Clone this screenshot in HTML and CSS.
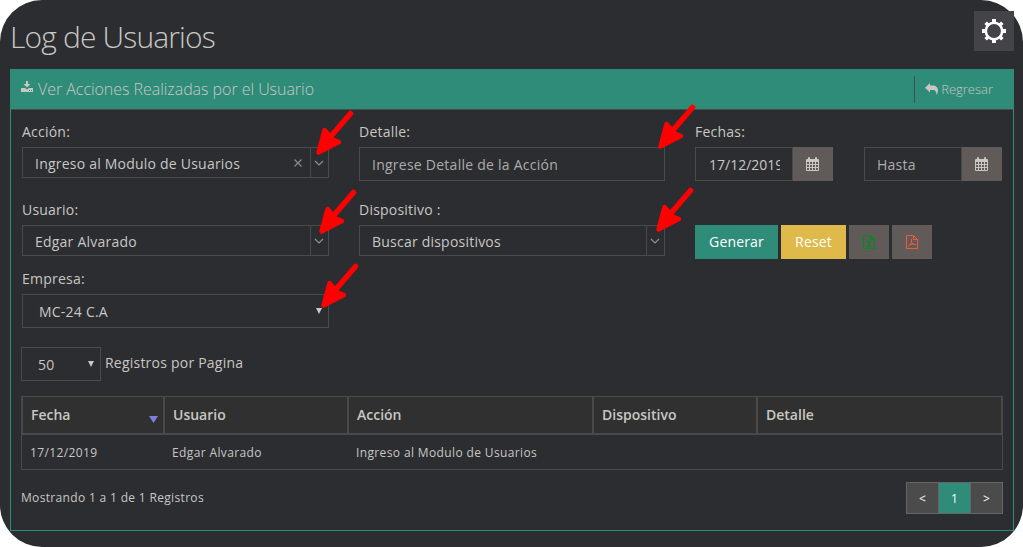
FILE: index.html
```html
<!DOCTYPE html>
<html lang="es">
<head>
<meta charset="utf-8">
<title>Log de Usuarios</title>
<link rel="stylesheet" href="styles.css">
</head>
<body>
<svg class="defs" width="0" height="0" aria-hidden="true">
  <symbol id="chevron" viewBox="0 0 10 6"><path d="M1 1l4 4 4-4" fill="none" stroke="currentColor" stroke-width="1.2"/></symbol>
  <symbol id="calendar" viewBox="0 0 13 14"><path fill="currentColor" fill-rule="evenodd" d="M0 3q0-1 1-1h1V1q0-1 1-1t1 1v1h5V1q0-1 1-1t1 1v1h1q1 0 1 1v10q0 1-1 1H1q-1 0-1-1zM1 5v2h2V5zm3 0v2h2V5zm3 0v2h2V5zm3 0v2h2V5zM1 8v2h2V8zm3 0v2h2V8zm3 0v2h2V8zm3 0v2h2V8zM1 11v2h2v-2zm3 0v2h2v-2zm3 0v2h2v-2zm3 0v2h2v-2z"/></symbol>
  <symbol id="pointer" viewBox="0 0 42 48"><path d="M36.500 5.500L18 27" stroke="#f00" stroke-width="5.500" stroke-linecap="round"/><path d="M4.500 44.500L10.500 22L16 28.500L19 31.500L25 34Z" fill="#f00" stroke="#f00" stroke-width="4.500" stroke-linejoin="round"/></symbol>
</svg>
<div class="page">
  <header class="page-head">
    <h1 class="title">Log de Usuarios</h1>
    <button class="settings" aria-label="Configuración">
      <svg width="24" height="24" viewBox="0 0 24 24"><circle cx="12" cy="12" r="8.200" fill="none" stroke="#fff" stroke-width="2.600"/><g fill="#fff"><path d="M10 0h4v4h-4zM10 20h4v4h-4zM0 10h4v4H0zM20 10h4v4h-4z"/><path d="M10.200 .2h3.600v3h-3.600zM10.200 20.800h3.600v3h-3.600zM.2 10.200h3v3.600h-3zM20.800 10.200h3v3.600h-3z" transform="rotate(45 12 12)"/></g></svg>
    </button>
  </header>

  <section class="card">
    <div class="card-head">
      <svg class="ic-download" width="12" height="11" viewBox="0 0 12 11"><path fill="currentColor" fill-rule="evenodd" d="M5 0h2v3h2.500L6 6.500 2.500 3H5zM0 7h4l2 1.500L8 7h4v4H0zM8 9v1h1V9zm2 0v1h1V9z"/></svg>
      <span class="card-title">Ver Acciones Realizadas por el Usuario</span>
      <a class="back">
        <svg width="13" height="12" viewBox="0 0 13 12"><path fill="currentColor" d="M5 0v2.500h2.500C11 2.500 13 4.500 13 7.500c0 1.800-.6 3.200-1.600 4.500.3-3.500-.9-5-3.900-5H5v2.500L0 4.800z"/></svg>
        <span>Regresar</span>
      </a>
    </div>

    <div class="card-body">
      <form class="filters">
        <div class="col">
          <div class="field">
            <label>Acción:</label>
            <div class="combo"><span class="value">Ingreso al Modulo de Usuarios</span>
              <svg class="clear" width="8" height="8" viewBox="0 0 8 8"><path d="M.5.5l7 7M7.500.5l-7 7" stroke="currentColor" stroke-width="1.100"/></svg>
              <span class="toggle"><svg width="10" height="6"><use href="#chevron"/></svg></span></div>
            <svg class="pointer" width="42" height="48"><use href="#pointer"/></svg>
          </div>
          <div class="field field-mid">
            <label>Usuario:</label>
            <div class="combo"><span class="value">Edgar Alvarado</span><span class="toggle"><svg width="10" height="6"><use href="#chevron"/></svg></span></div>
            <svg class="pointer p-usuario" width="42" height="48"><use href="#pointer"/></svg>
          </div>
          <div class="field field-last">
            <label>Empresa:</label>
            <div class="select"><span>MC-24 C.A</span><i class="caret"></i></div>
            <svg class="pointer p-empresa" width="42" height="48"><use href="#pointer"/></svg>
          </div>
        </div>
        <div class="col">
          <div class="field">
            <label>Detalle:</label>
            <input class="input" type="text" placeholder="Ingrese Detalle de la Acción">
            <svg class="pointer p-detalle" width="42" height="48"><use href="#pointer"/></svg>
          </div>
          <div class="field field-mid">
            <label>Dispositivo :</label>
            <div class="combo"><span class="value">Buscar dispositivos</span><span class="toggle"><svg width="10" height="6"><use href="#chevron"/></svg></span></div>
            <svg class="pointer p-disp" width="42" height="48"><use href="#pointer"/></svg>
          </div>
        </div>
        <div class="col">
          <div class="field">
            <label>Fechas:</label>
            <div class="dates">
              <div class="date"><input class="input from" type="text" value="17/12/2019"><span class="addon"><svg width="13" height="14"><use href="#calendar"/></svg></span></div>
              <div class="date"><input class="input" type="text" placeholder="Hasta"><span class="addon"><svg width="13" height="14"><use href="#calendar"/></svg></span></div>
            </div>
          </div>
          <div class="actions">
            <button class="btn btn-primary" type="button">Generar</button>
            <button class="btn btn-warn" type="button">Reset</button>
            <button class="btn btn-file xls" type="button" aria-label="Excel"><svg width="12" height="14" viewBox="0 0 12 14" fill="none" stroke="currentColor"><path d="M.5.5h7l4 4v9H.5zM7.500.5v4h4" stroke-width="1.200"/><path d="M3 6.500h6M3 11.500h6M4 6.500l4 5M8 6.500l-4 5"/></svg></button>
            <button class="btn btn-file pdf" type="button" aria-label="PDF"><svg width="12" height="14" viewBox="0 0 12 14" fill="none" stroke="currentColor"><path d="M.5.5h7l4 4v9H.5zM7.500.5v4h4"/><path d="M5.500 4v3.500L2.500 11.500M5.500 7.500Q7 9.800 10 9.500M4 9.800l4-1"/></svg></button>
          </div>
        </div>
      </form>

      <div class="page-size">
        <div class="select size"><span>50</span><i class="caret"></i></div>
        <span class="size-label">Registros por Pagina</span>
      </div>

      <div class="table">
        <div class="row head">
          <div>Fecha<i class="sort"></i></div><div>Usuario</div><div>Acción</div><div>Dispositivo</div><div>Detalle</div>
        </div>
        <div class="row data">
          <div>17/12/2019</div><div>Edgar Alvarado</div><div>Ingreso al Modulo de Usuarios</div><div></div><div></div>
        </div>
      </div>

      <footer class="foot">
        <span class="info">Mostrando 1 a 1 de 1 Registros</span>
        <nav class="pager"><a>&lt;</a><a class="active">1</a><a>&gt;</a></nav>
      </footer>
    </div>
  </section>
</div>
</body>
</html>
```
FILE: styles.css
```css
* { box-sizing: border-box; }
body { margin: 0; background: #fff; font-family: "Open Sans", sans-serif; font-size: 14px; color: #c8c7c3; overflow: hidden; }
.defs { display: none; }
button, input { font: inherit; color: inherit; border: 0; margin: 0; border-radius: 0; }
svg { display: block; flex: none; }

.page { width: 1023px; height: 547px; padding: 11px 9px 0 10px; background: #2c2d31; border-radius: 42px; }
.page-head { display: flex; justify-content: space-between; height: 58px; }
.title { margin: 5px 0 0; font-size: 30px; line-height: 41px; font-weight: 300; letter-spacing: -.85px; white-space: nowrap; }
.settings { width: 40px; height: 40px; padding: 8px; background: #434348; }

.card { width: 1004px; height: 462px; border: 1px solid #2f8c79; }
.card-head { display: flex; align-items: center; height: 40px; margin-top: -1px; padding: 0 10px; background: #2f8c79; border-bottom: 0; }
.ic-download { margin: -6px 5px 0 0; }
.card-title { font-size: 16px; font-weight: 300; letter-spacing: -.04px; white-space: nowrap; }
.back { display: flex; align-items: center; gap: 3px; height: 27px; margin-left: auto; margin-right: 10px; padding-left: 10px; border-left: 1px solid #3c5552; font-size: 13px; font-weight: 300; }

.card-body { padding: 13px 10px 0; border-top: 1px solid #4a4a4a; }
.filters { display: grid; grid-template-columns: 307px 306px 307px; column-gap: 30px; padding-left: 1px; height: 224px; }
.field { position: relative; height: 78px; letter-spacing: .22px; }
.field-mid { height: 69px; }
.field label { display: block; height: 24px; line-height: 18px; white-space: nowrap; }
.combo { display: flex; align-items: center; height: 31px; border: 1px solid #4a4a4a; padding-left: 12px; }
.value { flex: 1; white-space: nowrap; line-height: 29px; padding-top: 2px; }
.clear { color: #8f8f8d; margin-right: 8px; }
.toggle { display: flex; align-items: center; justify-content: center; width: 18px; height: 29px; padding-right: 1px; border-left: 1px solid #4a4a4a; color: #8f8f8d; }
.select { display: flex; align-items: center; justify-content: space-between; height: 34px; padding: 0 6px 0 16px; border: 1px solid #4a4a4a; }
.caret { width: 6px; height: 6px; background: #c8c7c3; clip-path: polygon(0 0, 100% 0, 50% 100%); }
.input { display: block; width: 100%; height: 34px; padding: 1px 12px 0; background: transparent; border: 1px solid #4a4a4a; outline: 0; letter-spacing: .25px; }
.input::placeholder { color: #adaca9; opacity: 1; }
.from { padding-left: 13px; letter-spacing: 0; }
.dates { display: flex; justify-content: space-between; }
.date { display: flex; width: 138px; }
.date .input { width: 98px; }
.addon { display: flex; align-items: center; justify-content: center; width: 40px; height: 34px; padding-right: 1px; background: #605a59; }

.actions { display: flex; gap: 3px; padding-top: 24px; }
.btn { display: flex; align-items: center; justify-content: center; height: 34px; padding: 0; color: #fff; }
.btn-primary { width: 83px; padding-bottom: 1px; background: #2f8c79; letter-spacing: .15px; }
.btn-warn { width: 65px; padding-bottom: 1px; background: #dfb949; letter-spacing: .15px; }
.btn-file { width: 40px; background: #605a59; }
.xls { color: #008c22; }
.pdf { color: #f05a3c; }

.pointer { position: absolute; left: 292px; top: -15px; }
.p-detalle { left: 297px; top: -21px; }
.p-usuario { left: 295px; top: -14px; }
.p-disp { left: 295px; top: -16px; }
.p-empresa { left: 297px; top: -9px; }

.page-size { display: flex; gap: 4px; height: 49px; letter-spacing: .22px; }
.size { width: 80px; }
.size-label { line-height: 32px; }

.table { width: 982px; border: 1px solid #4a4a4a; }
.row { display: grid; grid-template-columns: 142px 184px 245px 164px 1fr; }
.head { height: 38px; border: 0 solid #4a4a4a; border-width: 0 1px 2px; background: #303030; font-weight: 600; line-height: 36px; }
.head div { display: flex; align-items: center; justify-content: space-between; padding: 0 5px 0 8px; border-right: 2px solid #4a4a4a; }
.head div:last-child { border-right: 0; }
.sort { width: 9px; height: 7px; margin-top: 9px; background: #7b80dd; clip-path: polygon(0 0, 100% 0, 50% 100%); }
.data { height: 34px; line-height: 36px; font-size: 12px; letter-spacing: .37px; }
.data div { padding-left: 8px; white-space: nowrap; }

.foot { display: flex; justify-content: space-between; padding-top: 12px; }
.info { font-size: 12px; line-height: 31px; letter-spacing: .33px; }
.pager { display: flex; width: 97px; height: 32px; border: 1px solid #666; font-size: 12px; line-height: 32px; color: #fff; }
.pager a { flex: 1; text-align: center; background: #4b4b4b; }
.pager .active { flex: 0 0 33px; border: solid #666; border-width: 0 1px; background: #2f8c79; }
```
